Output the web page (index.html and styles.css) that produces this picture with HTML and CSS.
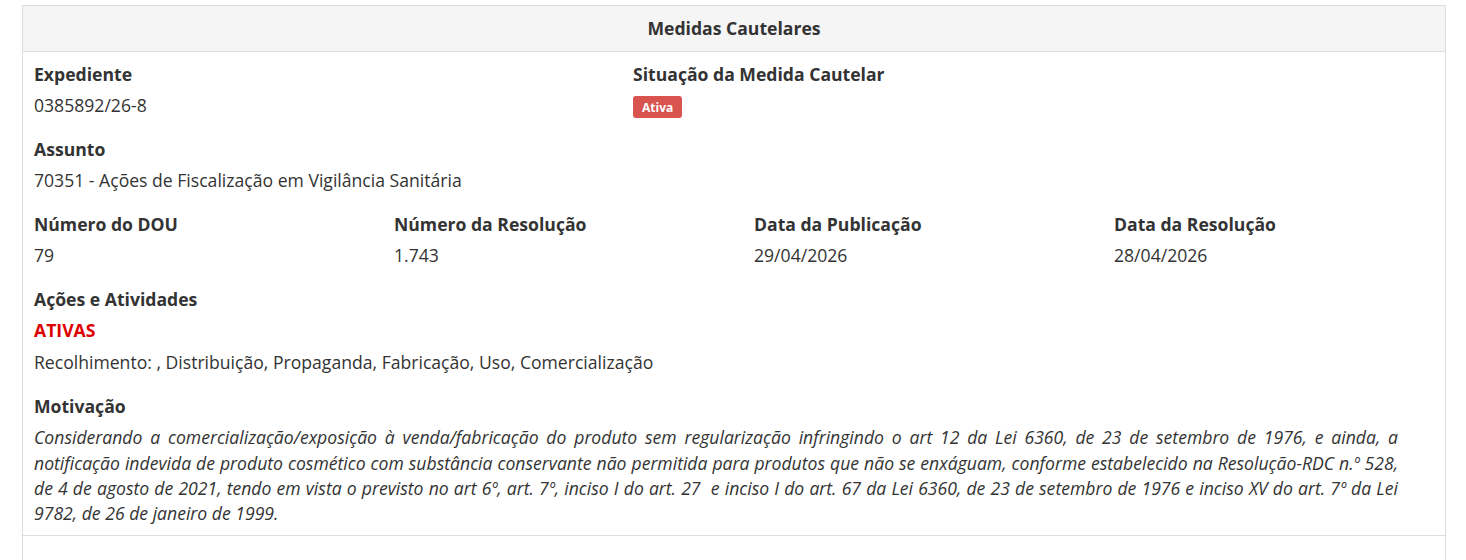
FILE: index.html
```html
<!DOCTYPE html>
<html>
    <head>
        <title>Medidas Cautelares</title>
        <link rel="stylesheet" href="styles.css">
    </head>
    <body>
        <div class="panel">
            <div class="panel-heading">Medidas Cautelares</div>
            <div class="panel-body">
                <div class="row row-top">
                    <div class="field">
                        <div class="label">Expediente</div>
                        <div class="value">0385892/26-8</div>
                    </div>
                    <div class="field">
                        <div class="label">Situação da Medida Cautelar</div>
                        <div class="value"><span class="badge">Ativa</span></div>
                    </div>
                </div>
                <div class="field">
                    <div class="label">Assunto</div>
                    <div class="value">70351 - Ações de Fiscalização em Vigilância Sanitária</div>
                </div>
                <div class="row row-four">
                    <div class="field">
                        <div class="label">Número do DOU</div>
                        <div class="value">79</div>
                    </div>
                    <div class="field">
                        <div class="label">Número da Resolução</div>
                        <div class="value">1.743</div>
                    </div>
                    <div class="field">
                        <div class="label">Data da Publicação</div>
                        <div class="value">29/04/2026</div>
                    </div>
                    <div class="field">
                        <div class="label">Data da Resolução</div>
                        <div class="value">28/04/2026</div>
                    </div>
                </div>
                <div class="field">
                    <div class="label">Ações e Atividades</div>
                    <div class="value status">ATIVAS</div>
                    <div class="value">Recolhimento: , Distribuição, Propaganda, Fabricação, Uso, Comercialização</div>
                </div>
                <div class="field">
                    <div class="label">Motivação</div>
                    <div class="value motive">Considerando a comercialização/exposição à venda/fabricação do produto sem regularização infringindo o art 12 da Lei 6360, de 23 de setembro de 1976, e ainda, a notificação indevida de produto cosmético com substância conservante não permitida para produtos que não se enxáguam, conforme estabelecido na Resolução-RDC n.º 528, de 4 de agosto de 2021, tendo em vista o previsto no art 6º, art. 7º, inciso I do art. 27&nbsp; e inciso I do art. 67 da Lei 6360, de 23 de setembro de 1976 e inciso XV do art. 7º da Lei 9782, de 26 de janeiro de 1999.</div>
                </div>
            </div>
            <div class="panel-footer"></div>
        </div>
    </body>
</html>
```

FILE: styles.css
```css
html, body {
    margin: 0;
    background: #fff;
    font-family: "Open Sans", sans-serif;
    color: #333;
    overflow: hidden;
}

.panel {
    margin: 5px 20px 0 22px;
    border: 1px solid #ddd;
    border-bottom: none;
}

.panel-heading {
    background: #f5f5f5;
    border-bottom: 1px solid #ddd;
    text-align: center;
    font-weight: bold;
    font-size: 17.6px;
    line-height: 45px;
}

.panel-body {
    padding: 10px 47px 9px 11px;
    border-bottom: 1px solid #ddd;
}

.field {
    margin-bottom: 19px;
}

.panel-body > .field:last-child {
    margin-bottom: 0;
}

.row {
    display: grid;
}

.row-top {
    grid-template-columns: 599px 1fr;
}

.row-four {
    grid-template-columns: 360px 360px 360px 1fr;
}

.label {
    font-weight: bold;
    font-size: 17.6px;
    line-height: 24px;
}

.value {
    margin-top: 7px;
    font-size: 17.6px;
    line-height: 25px;
}

.status {
    color: #d00;
    font-weight: bold;
}

.badge {
    display: inline-block;
    background: #d9534f;
    color: #fff;
    font-size: 12px;
    font-weight: bold;
    line-height: 15px;
    padding: 4px 9px 3px;
    border-radius: 3px;
    vertical-align: middle;
}

.motive {
    font-style: italic;
    text-align: justify;
    line-height: 25.3px;
}

.panel-footer {
    height: 24px;
}
```
